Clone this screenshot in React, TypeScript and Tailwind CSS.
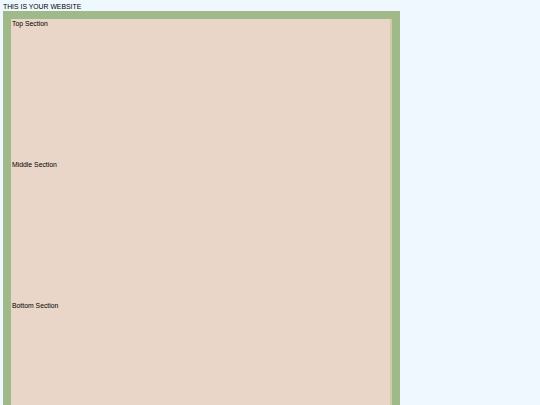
import React from "react";

export default function App() {
  return (
    <div className="min-h-[405px] w-[540px] bg-[#f0f8ff] overflow-hidden" style={{ fontFamily: '"Liberation Sans", Arial, sans-serif' }}>
      <div className="h-[11px] pl-[3px] pt-[3px] text-[6.85px] leading-[8px] text-black">THIS IS YOUR WEBSITE</div>
      <div className="ml-[3px] w-[397px] bg-[#9fba88] pt-[8px] pl-[8px] pr-[8px] h-[394px] overflow-hidden">
        <div className="flex">
          <div className="flex-1 bg-[#ead6c8] flex flex-col">
            <div className="h-[141px] shrink-0 pl-[1px] pt-[0.5px] text-[6.85px] leading-[8px] text-black">Top Section</div>
            <div className="h-[141px] shrink-0 pl-[1px] pt-[0.5px] text-[6.85px] leading-[8px] text-black">Middle Section</div>
            <div className="h-[141px] shrink-0 pl-[1px] pt-[0.5px] text-[6.85px] leading-[8px] text-black">Bottom Section</div>
          </div>
          <div className="w-[2px] bg-[#d2cba8]"></div>
        </div>
      </div>
    </div>
  );
}
